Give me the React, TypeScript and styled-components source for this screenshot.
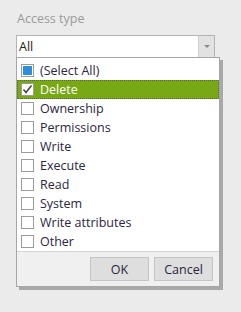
import React from 'react';
import styled, { createGlobalStyle } from 'styled-components';

const GlobalStyle = createGlobalStyle`
  html, body {
    margin: 0;
    padding: 0;
    background: #ebebeb;
  }
  body {
    font-family: "Open Sans", "Noto Sans", "Liberation Sans", sans-serif;
  }
`;

const Page = styled.div`
  position: relative;
  width: 241px;
  height: 312px;
  padding: 11px 0 0 16px;
  box-sizing: border-box;
`;

const Label = styled.div`
  color: #9a9a9a;
  font-size: 12.5px;
  line-height: 16px;
  padding-left: 1px;
  margin-bottom: 8px;
`;

const Combo = styled.div`
  display: flex;
  width: 199px;
  height: 23px;
  box-sizing: border-box;
  border: 1px solid #b4b4b4;
  background: #fff;
`;

const ComboValue = styled.div`
  flex: 1;
  font-size: 12.5px;
  color: #222;
  line-height: 21px;
  padding-left: 2px;
`;

const ComboButton = styled.div`
  width: 15px;
  background: #e2e2e2;
  border-left: 1px solid #d0d0d0;
  display: flex;
  align-items: center;
  justify-content: center;
`;

const Arrow = styled.div`
  width: 0;
  height: 0;
  border-left: 3px solid transparent;
  border-right: 3px solid transparent;
  border-top: 3px solid #8a8a8a;
`;

const Popup = styled.div`
  position: absolute;
  left: 16px;
  top: 57px;
  width: 204px;
  height: 230px;
  box-sizing: border-box;
  border: 1px solid #a6a6a6;
  background: #fff;
  box-shadow: 3px 3px 0 rgba(0, 0, 0, 0.28);
  display: flex;
  flex-direction: column;
`;

const List = styled.div`
  flex: 1;
  padding-top: 3px;
`;

const Row = styled.div<{ $active?: boolean }>`
  display: flex;
  align-items: center;
  height: 19px;
  box-sizing: border-box;
  padding-left: 3px;
  gap: 6px;
  font-size: 12.5px;
  color: ${(p) => (p.$active ? '#fff' : '#2b2540')};
  background: ${(p) => (p.$active ? '#79a816' : 'transparent')};
  border: 1px dotted ${(p) => (p.$active ? '#5a6a40' : 'transparent')};
`;

const Box = styled.div`
  width: 13px;
  height: 13px;
  box-sizing: border-box;
  border: 1px solid #9c9c9c;
  background: #fff;
  display: flex;
  align-items: center;
  justify-content: center;
  flex-shrink: 0;
`;

const Mixed = styled.div`
  width: 9px;
  height: 9px;
  background: #2d8fdc;
`;

const Footer = styled.div`
  height: 35px;
  border-top: 1px solid #d4d4d4;
  background: #f0f0f0;
  display: flex;
  justify-content: flex-end;
  align-items: flex-start;
  gap: 5px;
  padding: 5px 6px 0 0;
  box-sizing: border-box;
`;

const Button = styled.div`
  width: 59px;
  height: 24px;
  box-sizing: border-box;
  border: 1px solid #c4c4c4;
  background: #dedede;
  color: #2b2540;
  font-size: 12.5px;
  display: flex;
  align-items: center;
  justify-content: center;
`;

const items: { label: string; state: 'on' | 'mixed' | 'off' }[] = [
  { label: '(Select All)', state: 'mixed' },
  { label: 'Delete', state: 'on' },
  { label: 'Ownership', state: 'off' },
  { label: 'Permissions', state: 'off' },
  { label: 'Write', state: 'off' },
  { label: 'Execute', state: 'off' },
  { label: 'Read', state: 'off' },
  { label: 'System', state: 'off' },
  { label: 'Write attributes', state: 'off' },
  { label: 'Other', state: 'off' },
];

const Check = () => (
  <svg width="11" height="11" viewBox="0 0 11 11">
    <path d="M1.5 5.5 L4 8.5 L9.5 1.5" fill="none" stroke="#444" strokeWidth="1.6" />
  </svg>
);

export default function App() {
  return (
    <Page>
      <GlobalStyle />
      <Label>Access type</Label>
      <Combo>
        <ComboValue>All</ComboValue>
        <ComboButton>
          <Arrow />
        </ComboButton>
      </Combo>
      <Popup>
        <List>
          {items.map((it) => (
            <Row key={it.label} $active={it.state === 'on'}>
              <Box>
                {it.state === 'mixed' && <Mixed />}
                {it.state === 'on' && <Check />}
              </Box>
              {it.label}
            </Row>
          ))}
        </List>
        <Footer>
          <Button>OK</Button>
          <Button>Cancel</Button>
        </Footer>
      </Popup>
    </Page>
  );
}
